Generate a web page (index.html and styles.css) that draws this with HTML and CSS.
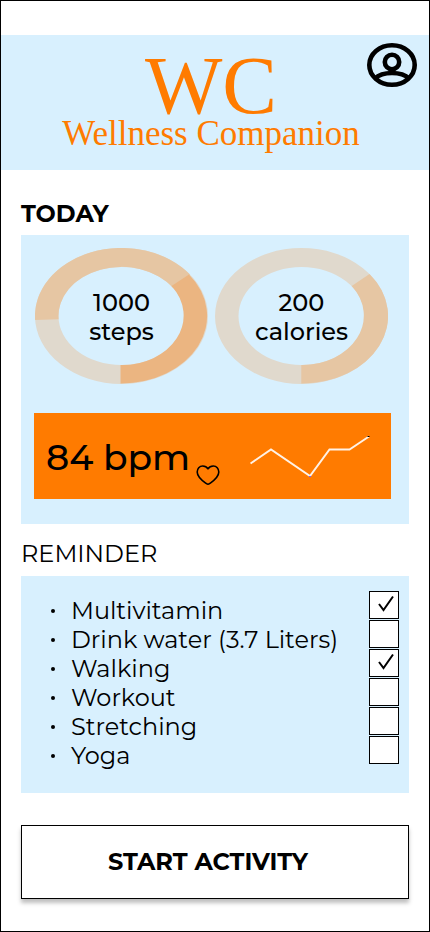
FILE: index.html
```html
<!DOCTYPE html>
<html lang="en">
<head>
<meta charset="utf-8">
<meta name="viewport" content="width=device-width, initial-scale=1">
<title>Wellness Companion</title>
<link rel="stylesheet" href="styles.css">
</head>
<body>
<header class="banner">
  <div class="brand">
    <div class="monogram">WC</div>
    <div class="name">Wellness Companion</div>
  </div>
  <button class="profile" type="button" aria-label="Profile">
    <svg width="50" height="44" viewBox="0 0 50 44" fill="none" stroke="#000" stroke-width="4.6">
      <ellipse cx="25" cy="22" rx="22.7" ry="19.7"/>
      <ellipse cx="25" cy="19" rx="7.2" ry="7.2"/>
      <path d="M8 35.500C12 31.500 18 30 25 30S38 31.500 42 35.500"/>
    </svg>
  </button>
</header>
<main class="content">
  <h1 class="heading strong">TODAY</h1>
  <section class="card today">
    <div class="rings">
      <div class="ring">
        <svg viewBox="0 0 173 136">
          <path class="base" fill-rule="evenodd" d="M0 68a86.5 68 0 1 0 173 0a86.5 68 0 1 0-173 0zM23.5 68a63 49 0 1 1 126 0a63 49 0 1 1-126 0z"/>
          <path class="mid" d="M.1 72A86.5 68 0 0 1 155 26.5L138 39.7A63 49 0 0 0 23.6 71.2z"/>
          <path class="dark" d="M85.5 135.5A85.5 67.5 0 0 0 154 26.5L136.5 38A61.5 49.5 0 0 1 85.5 117z"/>
        </svg>
        <p class="value">1000<br>steps</p>
      </div>
      <div class="ring">
        <svg viewBox="0 0 173 136">
          <path class="base" fill-rule="evenodd" d="M0 68a86.5 68 0 1 0 173 0a86.5 68 0 1 0-173 0zM23.5 68a63 49 0 1 1 126 0a63 49 0 1 1-126 0z"/>
          <path class="mid" d="M86.3 135.5A85.5 67.5 0 0 0 154.5 26L136.7 38A61.5 49.5 0 0 1 86.3 117z"/>
        </svg>
        <p class="value">200<br>calories</p>
      </div>
    </div>
    <div class="pulse">
      <span class="bpm">84 bpm</span>
      <svg class="heart" width="24" height="21" viewBox="0 0 24 21" fill="none" stroke="#000" stroke-width="1.6" stroke-linejoin="round">
        <path d="M12 3.9C10.5 1.5 8.500 1 6.700 1C3.500 1 1.200 3.700 1.200 7C1.200 12.500 7.500 16.500 10.500 18.700Q12 19.800 13.500 18.700C16.500 16.500 22.800 12.500 22.800 7C22.800 3.700 20.500 1 17.300 1C15.500 1 13.500 1.500 12 3.900Z"/>
      </svg>
      <svg class="trend" width="120" height="42" viewBox="0 0 120 42" fill="none">
        <path d="M.5 28.500L21 14.500L60 41L79.500 14.500H99.500L119 1.500" stroke="#fff2e6" stroke-width="2"/>
        <path d="M117.500 1.500h2" stroke="#000" stroke-width="1"/>
        <path d="M59 41.500h2" stroke="#7b61ff" stroke-width="1"/>
      </svg>
    </div>
  </section>
  <h2 class="heading">REMINDER</h2>
  <section class="card reminders">
    <ul class="tasks">
      <li><label for="t1">Multivitamin</label></li>
      <li><label for="t2">Drink water (3.7 Liters)</label></li>
      <li><label for="t3">Walking</label></li>
      <li><label for="t4">Workout</label></li>
      <li><label for="t5">Stretching</label></li>
      <li><label for="t6">Yoga</label></li>
    </ul>
    <div class="checks">
      <span class="check"><input id="t1" type="checkbox" checked><svg viewBox="0 0 30 28"><path d="M10 13L14.500 19L24 5.500"/></svg></span>
      <span class="check"><input id="t2" type="checkbox"><svg viewBox="0 0 30 28"><path d="M10 13L14.500 19L24 5.500"/></svg></span>
      <span class="check"><input id="t3" type="checkbox" checked><svg viewBox="0 0 30 28"><path d="M10 13L14.500 19L24 5.500"/></svg></span>
      <span class="check"><input id="t4" type="checkbox"><svg viewBox="0 0 30 28"><path d="M10 13L14.500 19L24 5.500"/></svg></span>
      <span class="check"><input id="t5" type="checkbox"><svg viewBox="0 0 30 28"><path d="M10 13L14.500 19L24 5.500"/></svg></span>
      <span class="check"><input id="t6" type="checkbox"><svg viewBox="0 0 30 28"><path d="M10 13L14.500 19L24 5.500"/></svg></span>
    </div>
  </section>
  <button class="start" type="button">START ACTIVITY</button>
</main>
</body>
</html>
```
FILE: styles.css
```css
* { box-sizing: border-box; }
body {
  margin: 0;
  min-height: 100vh;
  padding-top: 34px;
  border: 1px solid #000;
  background: #fff;
  color: #000;
  font: 400 24px/29px Montserrat, Inter, sans-serif;
}
h1, h2, p, ul { margin: 0; padding: 0; }
svg { display: block; }
.banner {
  position: relative;
  height: 135px;
  padding-right: 8px;
  background: #d8f0fe;
}
.brand {
  color: #ff7b00;
  font-family: "Liberation Serif", serif;
  text-align: center;
  padding-top: 13px;
}
.monogram { font-size: 82px; line-height: 76px; }
.name { font-size: 35px; line-height: 20px; white-space: nowrap; }
.profile {
  position: absolute;
  top: 8px;
  right: 12px;
  padding: 0;
  border: 0;
  background: none;
}
.content { padding: 29px 20px 32px; }
.heading { font-size: 24px; font-weight: 400; line-height: 30px; }
.strong { font-weight: 700; }
.card { margin-top: 6px; background: #d8f0fe; }
.today { padding: 13px 18px 25px 13px; }
.rings {
  display: grid;
  grid-template-columns: 1fr 1fr;
  gap: 7px;
  padding: 0 3px 0 1px;
}
.ring { display: grid; align-items: center; }
.ring > * { grid-area: 1 / 1; }
.value { text-align: center; padding-top: 2px; font-weight: 500; }
.base { fill: #e0d9cd; }
.mid { fill: #e6c6a3; }
.dark { fill: #ebb581; }
.pulse {
  display: flex;
  align-items: center;
  height: 86px;
  margin-top: 29px;
  padding: 0 21px 0 12px;
  background: #ff7b00;
}
.bpm { padding-top: 2px; font-size: 36px; font-weight: 500; line-height: 44px; white-space: nowrap; }
.heart { margin: 38px 0 0 6px; }
.trend { margin-left: auto; }
.today + .heading { margin-top: 15px; }
.reminders {
  display: flex;
  justify-content: space-between;
  margin-top: 7px;
  padding: 15px 10px 23px 50px;
}
.tasks { padding-top: 5px; list-style: none; }
.tasks li { display: flex; align-items: center; margin-left: -20px; }
.tasks li::before {
  content: "";
  width: 4px;
  height: 4px;
  margin-right: 16px;
  border-radius: 50%;
  background: #000;
}
.checks { display: grid; gap: 1px; align-content: start; }
.check { display: grid; width: 30px; height: 28px; }
.check > * { grid-area: 1 / 1; width: 100%; height: 100%; margin: 0; }
.check input { appearance: none; border: 1px solid #000; background: #fff; }
.check svg {
  visibility: hidden;
  pointer-events: none;
  fill: none;
  stroke: #000;
  stroke-width: 2;
}
.check input:checked + svg { visibility: visible; }
.start {
  display: block;
  width: 100%;
  height: 74px;
  margin-top: 32px;
  padding: 0 14px 2px 0;
  border: 1px solid #000;
  background: #fff;
  box-shadow: 0 4px 4px rgba(0, 0, 0, .25);
  color: #000;
  font: inherit;
  font-weight: 700;
}
```
